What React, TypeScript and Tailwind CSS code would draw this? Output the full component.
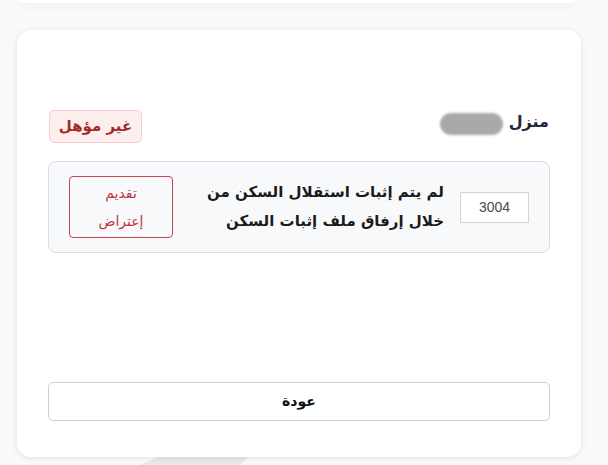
import React from "react";

export default function App() {
  return (
    <div
      className="w-[608px] h-[465px] overflow-hidden bg-[#fafafa] flex flex-col"
      style={{ fontFamily: '"DejaVu Sans", "Noto Sans", sans-serif' }}
    >
      <div className="mx-[20px] w-[555px] h-[3px] bg-white rounded-b-[14px] shadow-[0_2px_8px_rgba(0,0,0,0.10)]" />
      <div className="mt-[27px] ml-[17px] w-[564px] h-[427px] bg-white rounded-[14px] shadow-[0_1px_6px_rgba(0,0,0,0.10)] flex flex-col px-[31px] pt-[80px] pb-[36px] shrink-0 relative z-10">
        <div dir="rtl" className="flex items-center justify-between h-[33px] pl-[1px]">
          <div className="flex items-center gap-[6px] pr-[1px] mb-[9px]">
            <span className="text-[16px] font-bold text-[#1f2937] leading-none">منزل</span>
            <div className="w-[63px] h-[22px] rounded-full bg-[#a9a9ab] blur-[1px] mt-[4px]" />
          </div>
          <div className="h-[33px] w-[93px] flex items-center justify-center rounded-[5px] bg-[#fdeeee] border border-[#f6cccc] text-[#a32a2a] text-[15px] font-bold">
            غير مؤهل
          </div>
        </div>
        <div
          dir="rtl"
          className="mt-[18px] h-[92px] rounded-[8px] bg-[#f8f9fb] border border-[#d9dde3] flex items-center px-[20px]"
        >
          <div className="w-[69px] h-[31px] border border-[#d4d4d4] bg-white flex items-center justify-center text-[14px] text-[#4b4b4b] shrink-0" style={{ fontFamily: '"Liberation Sans", sans-serif' }}>
            3004
          </div>
          <div className="mr-[16px] text-[15px] font-bold text-[#1a1a1a] leading-[29px] text-right">
            <div>لم يتم إثبات استقلال السكن من</div>
            <div>خلال إرفاق ملف إثبات السكن</div>
          </div>
          <div className="mr-auto w-[104px] h-[62px] rounded-[4px] border border-[#c8414b] flex flex-col items-center justify-center text-[#c0353f] text-[14px] leading-[29px]">
            <div>تقديم</div>
            <div className="-mt-[1px]">إعتراض</div>
          </div>
        </div>
        <div className="mt-auto h-[39px] rounded-[5px] border border-[#cfcfcf] bg-white flex items-center justify-center text-[14px] font-bold text-[#111]" dir="rtl">
          عودة
        </div>
      </div>
      <div className="h-[8px] -mt-[1px] relative">
        <svg width="608" height="9" className="absolute top-0 left-0">
          <polygon points="160,0 250,0 240,9 140,9" fill="#e6ebe9" />
        </svg>
      </div>
    </div>
  );
}
